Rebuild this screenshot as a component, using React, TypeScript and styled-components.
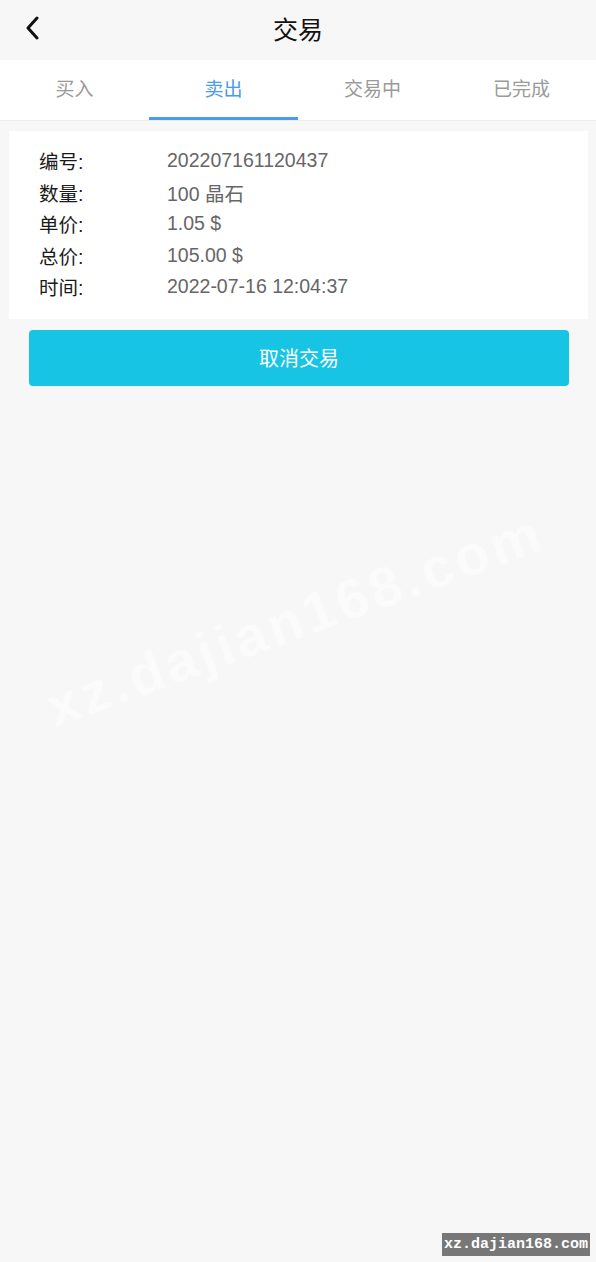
import styled, { createGlobalStyle } from "styled-components";

const GlobalStyle = createGlobalStyle`
  html, body {
    margin: 0;
    padding: 0;
    background: #f7f7f7;
  }
  body {
    font-family: "Liberation Sans", Arial, "Noto Sans CJK SC", sans-serif;
  }
`;

const Page = styled.div`
  position: relative;
  width: 596px;
  min-height: 1262px;
  background: #f7f7f7;
  overflow: hidden;
`;

const Header = styled.header`
  position: relative;
  height: 60px;
  display: flex;
  align-items: center;
  justify-content: center;
  padding-bottom: 4px;
  box-sizing: border-box;
`;

const BackButton = styled.button`
  position: absolute;
  left: 20px;
  top: 14px;
  width: 26px;
  height: 28px;
  padding: 0;
  border: none;
  background: none;
  display: flex;
  align-items: center;
  justify-content: center;
`;

const Title = styled.h1`
  margin: 0;
  font-size: 25px;
  font-weight: 400;
  color: #111;
`;

const Tabs = styled.nav`
  height: 60px;
  background: #fff;
  display: grid;
  grid-template-columns: repeat(4, 1fr);
  border-bottom: 1px solid #ececec;
  margin-bottom: 10px;
`;

const Tab = styled.div<{ $active?: boolean }>`
  position: relative;
  display: flex;
  align-items: center;
  justify-content: center;
  padding-bottom: 6px;
  font-size: 19px;
  color: ${(p) => (p.$active ? "#4a9be8" : "#9a9a9a")};

  &::after {
    content: "";
    display: ${(p) => (p.$active ? "block" : "none")};
    position: absolute;
    left: 0;
    right: 0;
    bottom: 0;
    height: 3px;
    background: #4a9be8;
  }
`;

const Card = styled.section`
  margin: 0 8px 0 9px;
  background: #fff;
  padding: 14px 30px 16px;
  display: flex;
  flex-direction: column;
`;

const Row = styled.div`
  display: flex;
  align-items: center;
  height: 31.5px;
  font-size: 19.5px;
`;

const Label = styled.span`
  width: 128px;
  color: #1a1a1a;
`;

const Value = styled.span`
  color: #666;
`;

const CancelButton = styled.button`
  display: block;
  margin: 11px 27px 0 29px;
  width: 540px;
  height: 56px;
  border: none;
  border-radius: 4px;
  background: #17c4e4;
  color: #fff;
  font-family: inherit;
  font-size: 20px;
`;

const Watermark = styled.div`
  position: absolute;
  left: 58px;
  top: 680px;
  height: 56px;
  line-height: 56px;
  font-family: "Liberation Sans", Arial, sans-serif;
  font-weight: 700;
  font-size: 56px;
  letter-spacing: 4px;
  color: rgba(255, 255, 255, 0.45);
  transform: rotate(-20deg);
  transform-origin: left bottom;
  white-space: nowrap;
  pointer-events: none;
`;

const SiteBadge = styled.div`
  position: absolute;
  right: 6px;
  bottom: 6px;
  height: 23px;
  padding: 0 2px;
  display: flex;
  align-items: center;
  background: #777;
  color: #fff;
  font-family: "Liberation Mono", monospace;
  font-weight: 700;
  font-size: 15px;
`;

const rows = [
  { label: "编号:", value: "202207161120437" },
  { label: "数量:", value: "100 晶石" },
  { label: "单价:", value: "1.05 $" },
  { label: "总价:", value: "105.00 $" },
  { label: "时间:", value: "2022-07-16 12:04:37" },
];

const tabs = ["买入", "卖出", "交易中", "已完成"];

export default function App() {
  return (
    <Page>
      <GlobalStyle />
      <Header>
        <BackButton aria-label="back">
          <svg width="16" height="24" viewBox="0 0 16 24">
            <path
              d="M12 2 L3 12 L12 22"
              fill="none"
              stroke="#111"
              strokeWidth="3"
              strokeLinecap="round"
              strokeLinejoin="round"
            />
          </svg>
        </BackButton>
        <Title>交易</Title>
      </Header>
      <Tabs>
        {tabs.map((t, i) => (
          <Tab key={t} $active={i === 1}>
            {t}
          </Tab>
        ))}
      </Tabs>
      <Card>
        {rows.map((r) => (
          <Row key={r.label}>
            <Label>{r.label}</Label>
            <Value>{r.value}</Value>
          </Row>
        ))}
      </Card>
      <CancelButton>取消交易</CancelButton>
      <Watermark>xz.dajian168.com</Watermark>
      <SiteBadge>xz.dajian168.com</SiteBadge>
    </Page>
  );
}
